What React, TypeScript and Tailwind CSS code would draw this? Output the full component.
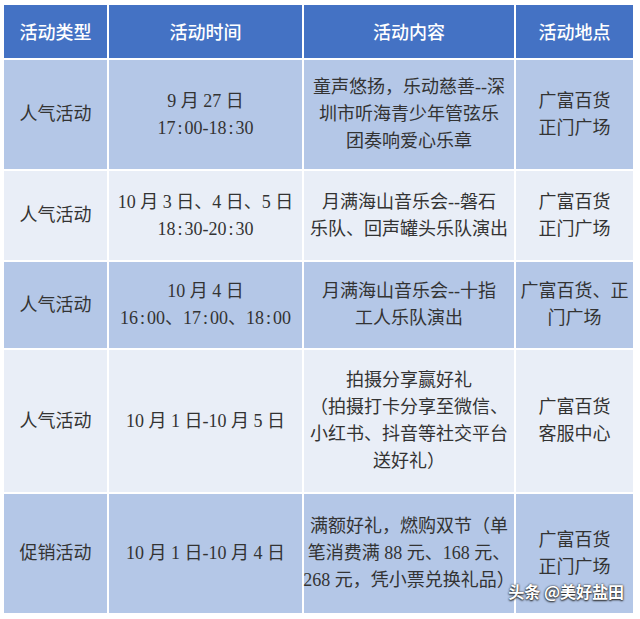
import React from 'react';

const serif = "font-['Liberation_Serif','Noto_Sans_CJK_SC',serif]";

// colons in the times are set wider in the source document
function Time({ text }: { text: string }) {
  const parts = text.split(':');
  return (
    <>
      {parts.map((p, i) => (
        <React.Fragment key={i}>
          {p}
          {i < parts.length - 1 && <span className="inline-block w-[9px] text-center">:</span>}
        </React.Fragment>
      ))}
    </>
  );
}

type Row = {
  type: string;
  time: React.ReactNode;
  content: React.ReactNode;
  place: React.ReactNode;
  dark: boolean;
};

const rows: Row[] = [
  {
    type: '人气活动',
    time: (
      <>
        9 月 27 日
        <br />
        <Time text="17:00-18:30" />
      </>
    ),
    content: (
      <>
        童声悠扬，乐动慈善--深
        <br />
        圳市听海青少年管弦乐
        <br />
        团奏响爱心乐章
      </>
    ),
    place: (
      <>
        广富百货
        <br />
        正门广场
      </>
    ),
    dark: true,
  },
  {
    type: '人气活动',
    time: (
      <>
        10 月 3 日、4 日、5 日
        <br />
        <Time text="18:30-20:30" />
      </>
    ),
    content: (
      <>
        月满海山音乐会--磐石
        <br />
        乐队、回声罐头乐队演出
      </>
    ),
    place: (
      <>
        广富百货
        <br />
        正门广场
      </>
    ),
    dark: false,
  },
  {
    type: '人气活动',
    time: (
      <>
        10 月 4 日
        <br />
        <Time text="16:00、17:00、18:00" />
      </>
    ),
    content: (
      <>
        月满海山音乐会--十指
        <br />
        工人乐队演出
      </>
    ),
    place: (
      <>
        广富百货、正
        <br />
        门广场
      </>
    ),
    dark: true,
  },
  {
    type: '人气活动',
    time: <>10 月 1 日-10 月 5 日</>,
    content: (
      <>
        拍摄分享赢好礼
        <br />
        （拍摄打卡分享至微信、
        <br />
        小红书、抖音等社交平台
        <br />
        送好礼）
      </>
    ),
    place: (
      <>
        广富百货
        <br />
        客服中心
      </>
    ),
    dark: false,
  },
  {
    type: '促销活动',
    time: <>10 月 1 日-10 月 4 日</>,
    content: (
      <>
        满额好礼，燃购双节（单
        <br />
        笔消费满 88 元、168 元、
        <br />
        268 元，凭小票兑换礼品）
      </>
    ),
    place: (
      <>
        广富百货
        <br />
        正门广场
      </>
    ),
    dark: true,
  },
];

const headers = ['活动类型', '活动时间', '活动内容', '活动地点'];

export default function App() {
  return (
    <div className="relative w-[640px] h-[619px] bg-white pt-[5px] pl-[4px] overflow-hidden">
      <div className="grid grid-cols-[103px_193px_210px_117px] grid-rows-[53px_109px_89px_86px_142px_119px] gap-[2px]">
        {headers.map((h) => (
          <div
            key={h}
            className="flex items-center justify-center bg-[#4472c4] text-white text-[18px] font-['Noto_Sans_CJK_SC',sans-serif] font-medium"
          >
            {h}
          </div>
        ))}

        {rows.map((r, i) => {
          const bg = r.dark ? 'bg-[#b4c7e7]' : 'bg-[#e9eef7]';
          const cell = `flex items-center justify-center text-center whitespace-nowrap text-[18px] leading-[27px] text-[#333] ${serif} ${bg}`;
          return (
            <React.Fragment key={i}>
              <div className={cell}>{r.type}</div>
              <div className={cell}>
                <div>{r.time}</div>
              </div>
              <div className={cell}>
                <div>{r.content}</div>
              </div>
              <div className={cell}>
                <div>{r.place}</div>
              </div>
            </React.Fragment>
          );
        })}
      </div>

      {/* watermark */}
      <div className="absolute right-[16px] bottom-[16px] text-white text-[16px] font-bold font-['Noto_Sans_CJK_SC',sans-serif] [text-shadow:0_0_2px_#222,0_1px_2px_#222]">
        头条 @美好盐田
      </div>
    </div>
  );
}
